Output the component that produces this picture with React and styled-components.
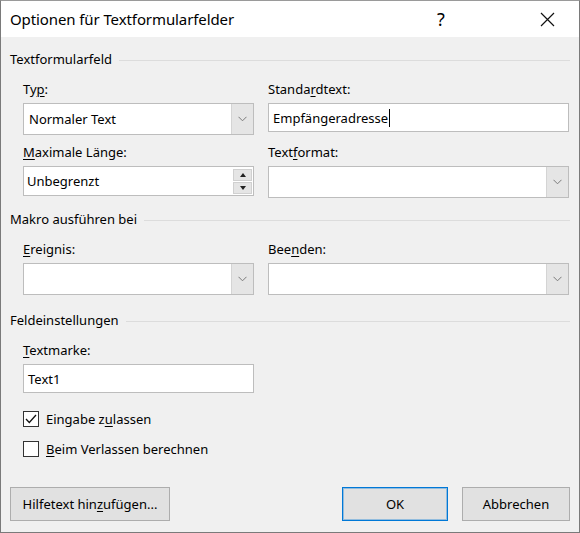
import React from "react";
import styled, { createGlobalStyle, css } from "styled-components";

const GlobalStyle = createGlobalStyle`
  html, body { margin: 0; padding: 0; background: #f0f0f0; }
  body { font-family: "Noto Sans", "Open Sans", sans-serif; color: #000; }
  * { box-sizing: border-box; }
`;

const Window = styled.div`
  width: 580px;
  height: 533px;
  border: 1px solid #7a7a7a;
  border-top-color: #9a9a9a;
  background: #f0f0f0;
  display: flex;
  flex-direction: column;
`;

const TitleBar = styled.div`
  height: 36px;
  background: #fff;
  display: flex;
  align-items: center;
  padding-left: 9px;
`;

const Title = styled.div`
  flex: 1;
  font-size: 15px;
  letter-spacing: -0.1px;
`;

const TitleButton = styled.div`
  width: 46px;
  height: 36px;
  display: flex;
  align-items: center;
  justify-content: center;
  font-size: 18px;
  margin-right: ${(p) => p.$mr || 0}px;
`;

const Body = styled.div`
  flex: 1;
  display: flex;
  flex-direction: column;
  padding: 0 9px 0 9px;
  font-size: 13px;
`;

const SectionHeader = styled.div`
  display: flex;
  align-items: center;
  height: 20px;
  margin-top: ${(p) => p.$mt}px;
  &::after {
    content: "";
    flex: 1;
    height: 1px;
    background: #dcdcdc;
    margin-left: 7px;
    margin-top: 2px;
  }
`;

const FieldGrid = styled.div`
  display: grid;
  grid-template-columns: 231px 301px;
  column-gap: 14px;
  row-gap: 7px;
  padding-left: 13px;
  margin-top: 10px;
`;

const Field = styled.div`
  display: flex;
  flex-direction: column;
  gap: 4px;
`;

const Label = styled.div`
  height: 20px;
  line-height: 20px;
  white-space: nowrap;
`;

const U = styled.span`
  text-decoration: underline;
  text-underline-offset: 2px;
  text-decoration-thickness: 1px;
`;

const boxBase = css`
  background: #fff;
  border: 1px solid #bdbdbd;
  display: flex;
  align-items: center;
`;

const TextBox = styled.div`
  ${boxBase};
  height: ${(p) => p.$h || 29}px;
  padding-left: 4px;
`;

const Caret = styled.span`
  display: inline-block;
  width: 1px;
  height: 18px;
  background: #000;
  margin-left: 1px;
`;

const Combo = styled.div`
  ${boxBase};
  height: 32px;
  padding-left: 5px;
  justify-content: space-between;
  align-items: stretch;
`;

const ComboText = styled.div`
  display: flex;
  align-items: center;
`;

const DropButton = styled.div`
  width: 22px;
  background: #e5e5e5;
  border-left: 1px solid #d4d4d4;
  display: flex;
  align-items: center;
  justify-content: center;
`;

const SpinBox = styled.div`
  ${boxBase};
  height: 30px;
  padding-left: 3px;
  padding-right: 1px;
  justify-content: space-between;
`;

const SpinButtons = styled.div`
  display: flex;
  flex-direction: column;
  gap: 1px;
`;

const SpinButton = styled.div`
  width: 19px;
  height: 12px;
  background: #e5e5e5;
  border: 1px solid #d0d0d0;
  display: flex;
  align-items: center;
  justify-content: center;
`;

const Triangle = styled.div`
  width: 0;
  height: 0;
  border-left: 3.5px solid transparent;
  border-right: 3.5px solid transparent;
  ${(p) =>
    p.$up
      ? css`border-bottom: 4px solid #222;`
      : css`border-top: 4px solid #222;`}
`;

const SingleField = styled.div`
  padding-left: 13px;
  margin-top: 10px;
  display: flex;
  flex-direction: column;
  gap: 4px;
  width: 244px;
`;

const CheckList = styled.div`
  padding-left: 13px;
  margin-top: 18px;
  display: flex;
  flex-direction: column;
  gap: 14px;
`;

const CheckRow = styled.div`
  display: flex;
  align-items: center;
  gap: 7px;
  height: 16px;
`;

const CheckBox = styled.div`
  width: 16px;
  height: 16px;
  border: 1px solid #333;
  background: #fff;
  display: flex;
  align-items: center;
  justify-content: center;
`;

const Footer = styled.div`
  margin-top: auto;
  margin-bottom: 11px;
  display: flex;
  align-items: center;
`;

const Button = styled.div`
  height: 34px;
  width: ${(p) => p.$w}px;
  margin-left: ${(p) => p.$ml || 0}px;
  background: #e1e1e1;
  border: 1px solid ${(p) => (p.$default ? "#0078d7" : "#adadad")};
  box-shadow: ${(p) => (p.$default ? "inset 0 0 0 1px rgba(0,120,215,0.35)" : "none")};
  display: flex;
  align-items: center;
  justify-content: center;
  font-size: 13px;
`;

const Chevron = () => (
  <svg width="9" height="6" viewBox="0 0 9 6">
    <path d="M0.5 0.8 L4.5 4.8 L8.5 0.8" fill="none" stroke="#7a7a7a" strokeWidth="1" />
  </svg>
);

const CloseIcon = () => (
  <svg width="15" height="15" viewBox="0 0 15 15">
    <path d="M1 1 L14 14 M14 1 L1 14" stroke="#111" strokeWidth="1.2" />
  </svg>
);

const CheckMark = () => (
  <svg width="12" height="10" viewBox="0 0 12 10">
    <path d="M1 5 L4.3 8.5 L11 1" fill="none" stroke="#111" strokeWidth="1.3" />
  </svg>
);

export default function App() {
  return (
    <>
      <GlobalStyle />
      <Window>
        <TitleBar>
          <Title>Optionen für Textformularfelder</Title>
          <TitleButton $mr={60}>?</TitleButton>
          <TitleButton $mr={9}>
            <CloseIcon />
          </TitleButton>
        </TitleBar>
        <Body>
          <SectionHeader $mt={12}>Textformularfeld</SectionHeader>
          <FieldGrid>
            <Field>
              <Label>
                Ty<U>p</U>:
              </Label>
              <Combo>
                <ComboText>Normaler Text</ComboText>
                <DropButton>
                  <Chevron />
                </DropButton>
              </Combo>
            </Field>
            <Field>
              <Label>
                Standa<U>r</U>dtext:
              </Label>
              <TextBox>
                Empfängeradresse
                <Caret />
              </TextBox>
            </Field>
            <Field>
              <Label>
                <U>M</U>aximale Länge:
              </Label>
              <SpinBox>
                <span>Unbegrenzt</span>
                <SpinButtons>
                  <SpinButton>
                    <Triangle $up />
                  </SpinButton>
                  <SpinButton>
                    <Triangle />
                  </SpinButton>
                </SpinButtons>
              </SpinBox>
            </Field>
            <Field>
              <Label>
                Text<U>f</U>ormat:
              </Label>
              <Combo>
                <ComboText />
                <DropButton>
                  <Chevron />
                </DropButton>
              </Combo>
            </Field>
          </FieldGrid>

          <SectionHeader $mt={11}>Makro ausführen bei</SectionHeader>
          <FieldGrid>
            <Field>
              <Label>
                <U>E</U>reignis:
              </Label>
              <Combo>
                <ComboText />
                <DropButton>
                  <Chevron />
                </DropButton>
              </Combo>
            </Field>
            <Field>
              <Label>
                Bee<U>n</U>den:
              </Label>
              <Combo>
                <ComboText />
                <DropButton>
                  <Chevron />
                </DropButton>
              </Combo>
            </Field>
          </FieldGrid>

          <SectionHeader $mt={15}>Feldeinstellungen</SectionHeader>
          <SingleField>
            <Label>
              <U>T</U>extmarke:
            </Label>
            <TextBox>Text1</TextBox>
          </SingleField>

          <CheckList>
            <CheckRow>
              <CheckBox>
                <CheckMark />
              </CheckBox>
              <span>
                Eingabe z<U>u</U>lassen
              </span>
            </CheckRow>
            <CheckRow>
              <CheckBox />
              <span>
                <U>B</U>eim Verlassen berechnen
              </span>
            </CheckRow>
          </CheckList>

          <Footer>
            <Button $w={160}>
              Hilfetext hin<U>z</U>ufügen...
            </Button>
            <Button $w={106} $ml={172} $default>
              OK
            </Button>
            <Button $w={108} $ml={14}>
              Abbrechen
            </Button>
          </Footer>
        </Body>
      </Window>
    </>
  );
}
